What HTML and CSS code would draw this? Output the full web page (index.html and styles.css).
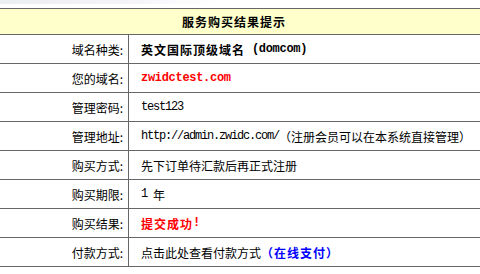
FILE: index.html
```html
<!DOCTYPE html>
<html lang="zh-CN">
<head>
<meta charset="utf-8">
<title>服务购买结果提示</title>
<link rel="stylesheet" href="styles.css">
</head>
<body>
<div class="topband"><div class="fade"></div></div>
<div class="result">
  <div class="head">服务购买结果提示</div>
  <div class="row">
    <div class="label">域名种类:</div>
    <div class="value"><b class="bold">英文国际顶级域名</b><b class="mono-b"> (domcom)</b></div>
  </div>
  <div class="row">
    <div class="label">您的域名:</div>
    <div class="value"><b class="mono-b red">zwidctest.com</b></div>
  </div>
  <div class="row">
    <div class="label">管理密码:</div>
    <div class="value"><span class="mono">test123</span></div>
  </div>
  <div class="row">
    <div class="label">管理地址:</div>
    <div class="value"><span class="mono">http://admin.zwidc.com/</span>（注册会员可以在本系统直接管理）</div>
  </div>
  <div class="row">
    <div class="label">购买方式:</div>
    <div class="value">先下订单待汇款后再正式注册</div>
  </div>
  <div class="row">
    <div class="label">购买期限:</div>
    <div class="value"><span class="mono">1 </span>年</div>
  </div>
  <div class="row">
    <div class="label">购买结果:</div>
    <div class="value"><b class="bold red">提交成功</b><b class="mono-b red">!</b></div>
  </div>
  <div class="row">
    <div class="label">付款方式:</div>
    <div class="value">点击此处查看付款方式<b class="bold blue">（在线支付）</b></div>
  </div>
</div>
</body>
</html>
```
FILE: styles.css
```css
html, body {
  margin: 0;
  padding: 0;
  background: #ffffff;
}
body {
  font-family: "Noto Sans CJK SC", "DejaVu Sans", sans-serif;
  font-size: 12px;
  color: #000;
}
.topband {
  height: 8px;
}
.fade {
  width: 220px;
  height: 4px;
  background: linear-gradient(to right, #eceef2, #f6f4f8 60%, #ffffff);
}
.result {
  width: 100%;
}
.head {
  box-sizing: border-box;
  height: 27px;
  border-top: 1px solid #666;
  border-bottom: 1px solid #666;
  background: #ffffcc;
  display: flex;
  align-items: center;
  justify-content: center;
  padding-right: 12px;
  font-weight: bold;
  letter-spacing: 1px;
}
.row {
  box-sizing: border-box;
  height: 29px;
  border-bottom: 1px solid #666;
  display: grid;
  grid-template-columns: 129px 1fr;
}
.label {
  box-sizing: border-box;
  border-right: 1px solid #666;
  display: flex;
  align-items: center;
  justify-content: flex-end;
  padding-right: 5px;
}
.value {
  display: flex;
  align-items: center;
  padding-left: 12px;
  white-space: pre;
}
.bold {
  font-weight: bold;
  letter-spacing: 1px;
}
.mono {
  font-family: "Liberation Mono", monospace;
  font-size: 12px;
  letter-spacing: -1.2px;
}
.mono-b {
  font-family: "Liberation Mono", monospace;
  font-size: 12px;
  font-weight: bold;
  letter-spacing: -0.3px;
}
.red {
  color: #ff0000;
}
.blue {
  color: #0000ff;
}
```
